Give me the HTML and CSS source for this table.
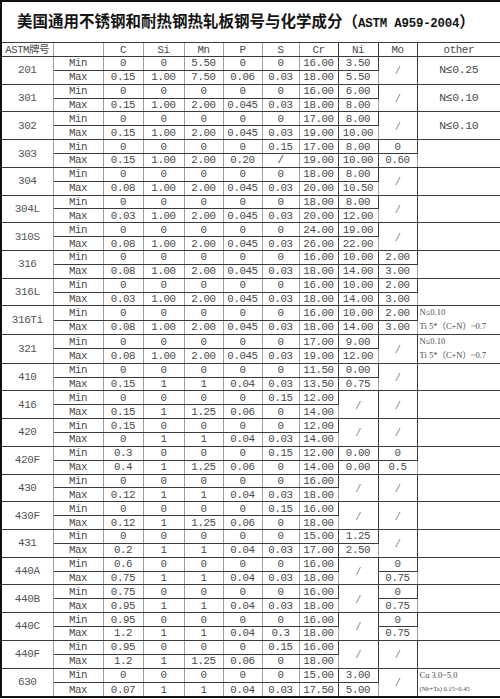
FILE: index.html
```html
<!DOCTYPE html>
<html lang="zh-CN">
<head>
<meta charset="utf-8">
<title>美国通用不锈钢和耐热钢热轧板钢号与化学成分</title>
<link rel="stylesheet" href="styles.css">
</head>
<body>
<table class="sheet">
<colgroup>
<col class="c1"><col class="c2"><col class="c3"><col class="c4"><col class="c5"><col class="c6"><col class="c7"><col class="c8"><col class="c9"><col class="c10"><col class="c11">
</colgroup>
<tbody>
<tr class="t"><td colspan="11" class="title">美国通用不锈钢和耐热钢热轧板钢号与化学成分（<span class="lat">ASTM A959-2004</span>）</td></tr>
<tr class="h"><td class="hd">ASTM牌号</td><td></td><td>C</td><td>Si</td><td>Mn</td><td>P</td><td>S</td><td class="cr">Cr</td><td class="ni">Ni</td><td class="mo">Mo</td><td>other</td></tr>

<tr class="d"><td class="g" rowspan="2">201</td><td class="m">Min</td><td>0</td><td>0</td><td>5.50</td><td>0</td><td>0</td><td class="cr">16.00</td><td class="ni">3.50</td><td class="mo sl" rowspan="2">/</td><td class="o" rowspan="2">N≤0.25</td></tr>
<tr class="d"><td class="m">Max</td><td>0.15</td><td>1.00</td><td>7.50</td><td>0.06</td><td>0.03</td><td class="cr">18.00</td><td class="ni">5.50</td></tr>

<tr class="d"><td class="g" rowspan="2">301</td><td class="m">Min</td><td>0</td><td>0</td><td>0</td><td>0</td><td>0</td><td class="cr">16.00</td><td class="ni">6.00</td><td class="mo sl" rowspan="2">/</td><td class="o" rowspan="2">N≤0.10</td></tr>
<tr class="d"><td class="m">Max</td><td>0.15</td><td>1.00</td><td>2.00</td><td>0.045</td><td>0.03</td><td class="cr">18.00</td><td class="ni">8.00</td></tr>

<tr class="d"><td class="g" rowspan="2">302</td><td class="m">Min</td><td>0</td><td>0</td><td>0</td><td>0</td><td>0</td><td class="cr">17.00</td><td class="ni">8.00</td><td class="mo sl" rowspan="2">/</td><td class="o" rowspan="2">N≤0.10</td></tr>
<tr class="d"><td class="m">Max</td><td>0.15</td><td>1.00</td><td>2.00</td><td>0.045</td><td>0.03</td><td class="cr">19.00</td><td class="ni">10.00</td></tr>

<tr class="d"><td class="g" rowspan="2">303</td><td class="m">Min</td><td>0</td><td>0</td><td>0</td><td>0</td><td>0.15</td><td class="cr">17.00</td><td class="ni">8.00</td><td class="mo">0</td><td class="o" rowspan="2"></td></tr>
<tr class="d"><td class="m">Max</td><td>0.15</td><td>1.00</td><td>2.00</td><td>0.20</td><td>/</td><td class="cr">19.00</td><td class="ni">10.00</td><td class="mo">0.60</td></tr>

<tr class="d"><td class="g" rowspan="2">304</td><td class="m">Min</td><td>0</td><td>0</td><td>0</td><td>0</td><td>0</td><td class="cr">18.00</td><td class="ni">8.00</td><td class="mo sl" rowspan="2">/</td><td class="o" rowspan="2"></td></tr>
<tr class="d"><td class="m">Max</td><td>0.08</td><td>1.00</td><td>2.00</td><td>0.045</td><td>0.03</td><td class="cr">20.00</td><td class="ni">10.50</td></tr>

<tr class="d"><td class="g" rowspan="2">304L</td><td class="m">Min</td><td>0</td><td>0</td><td>0</td><td>0</td><td>0</td><td class="cr">18.00</td><td class="ni">8.00</td><td class="mo sl" rowspan="2">/</td><td class="o" rowspan="2"></td></tr>
<tr class="d"><td class="m">Max</td><td>0.03</td><td>1.00</td><td>2.00</td><td>0.045</td><td>0.03</td><td class="cr">20.00</td><td class="ni">12.00</td></tr>

<tr class="d"><td class="g" rowspan="2">310S</td><td class="m">Min</td><td>0</td><td>0</td><td>0</td><td>0</td><td>0</td><td class="cr">24.00</td><td class="ni">19.00</td><td class="mo sl" rowspan="2">/</td><td class="o" rowspan="2"></td></tr>
<tr class="d"><td class="m">Max</td><td>0.08</td><td>1.00</td><td>2.00</td><td>0.045</td><td>0.03</td><td class="cr">26.00</td><td class="ni">22.00</td></tr>

<tr class="d"><td class="g" rowspan="2">316</td><td class="m">Min</td><td>0</td><td>0</td><td>0</td><td>0</td><td>0</td><td class="cr">16.00</td><td class="ni">10.00</td><td class="mo">2.00</td><td class="o" rowspan="2"></td></tr>
<tr class="d"><td class="m">Max</td><td>0.08</td><td>1.00</td><td>2.00</td><td>0.045</td><td>0.03</td><td class="cr">18.00</td><td class="ni">14.00</td><td class="mo">3.00</td></tr>

<tr class="d"><td class="g" rowspan="2">316L</td><td class="m">Min</td><td>0</td><td>0</td><td>0</td><td>0</td><td>0</td><td class="cr">16.00</td><td class="ni">10.00</td><td class="mo">2.00</td><td class="o" rowspan="2"></td></tr>
<tr class="d"><td class="m">Max</td><td>0.03</td><td>1.00</td><td>2.00</td><td>0.045</td><td>0.03</td><td class="cr">18.00</td><td class="ni">14.00</td><td class="mo">3.00</td></tr>

<tr class="d"><td class="g" rowspan="2">316Ti</td><td class="m">Min</td><td>0</td><td>0</td><td>0</td><td>0</td><td>0</td><td class="cr">16.00</td><td class="ni">10.00</td><td class="mo">2.00</td><td class="o note" rowspan="2"><div>N≤0.10</div><div>Ti 5*（C+N）~0.7</div></td></tr>
<tr class="d"><td class="m">Max</td><td>0.08</td><td>1.00</td><td>2.00</td><td>0.045</td><td>0.03</td><td class="cr">18.00</td><td class="ni">14.00</td><td class="mo">3.00</td></tr>

<tr class="d"><td class="g" rowspan="2">321</td><td class="m">Min</td><td>0</td><td>0</td><td>0</td><td>0</td><td>0</td><td class="cr">17.00</td><td class="ni">9.00</td><td class="mo sl" rowspan="2">/</td><td class="o note" rowspan="2"><div>N≤0.10</div><div>Ti 5*（C+N）~0.7</div></td></tr>
<tr class="d"><td class="m">Max</td><td>0.08</td><td>1.00</td><td>2.00</td><td>0.045</td><td>0.03</td><td class="cr">19.00</td><td class="ni">12.00</td></tr>

<tr class="d"><td class="g" rowspan="2">410</td><td class="m">Min</td><td>0</td><td>0</td><td>0</td><td>0</td><td>0</td><td class="cr">11.50</td><td class="ni">0.00</td><td class="mo sl" rowspan="2">/</td><td class="o" rowspan="2"></td></tr>
<tr class="d"><td class="m">Max</td><td>0.15</td><td>1</td><td>1</td><td>0.04</td><td>0.03</td><td class="cr">13.50</td><td class="ni">0.75</td></tr>

<tr class="d"><td class="g" rowspan="2">416</td><td class="m">Min</td><td>0</td><td>0</td><td>0</td><td>0</td><td>0.15</td><td class="cr">12.00</td><td class="ni sl" rowspan="2">/</td><td class="mo sl" rowspan="2">/</td><td class="o" rowspan="2"></td></tr>
<tr class="d"><td class="m">Max</td><td>0.15</td><td>1</td><td>1.25</td><td>0.06</td><td>0</td><td class="cr">14.00</td></tr>

<tr class="d"><td class="g" rowspan="2">420</td><td class="m">Min</td><td>0.15</td><td>0</td><td>0</td><td>0</td><td>0</td><td class="cr">12.00</td><td class="ni sl" rowspan="2">/</td><td class="mo sl" rowspan="2">/</td><td class="o" rowspan="2"></td></tr>
<tr class="d"><td class="m">Max</td><td>0</td><td>1</td><td>1</td><td>0.04</td><td>0.03</td><td class="cr">14.00</td></tr>

<tr class="d"><td class="g" rowspan="2">420F</td><td class="m">Min</td><td>0.3</td><td>0</td><td>0</td><td>0</td><td>0.15</td><td class="cr">12.00</td><td class="ni">0.00</td><td class="mo">0</td><td class="o" rowspan="2"></td></tr>
<tr class="d"><td class="m">Max</td><td>0.4</td><td>1</td><td>1.25</td><td>0.06</td><td>0</td><td class="cr">14.00</td><td class="ni">0.00</td><td class="mo">0.5</td></tr>

<tr class="d"><td class="g" rowspan="2">430</td><td class="m">Min</td><td>0</td><td>0</td><td>0</td><td>0</td><td>0</td><td class="cr">16.00</td><td class="ni sl" rowspan="2">/</td><td class="mo sl" rowspan="2">/</td><td class="o" rowspan="2"></td></tr>
<tr class="d"><td class="m">Max</td><td>0.12</td><td>1</td><td>1</td><td>0.04</td><td>0.03</td><td class="cr">18.00</td></tr>

<tr class="d"><td class="g" rowspan="2">430F</td><td class="m">Min</td><td>0</td><td>0</td><td>0</td><td>0</td><td>0.15</td><td class="cr">16.00</td><td class="ni sl" rowspan="2">/</td><td class="mo sl" rowspan="2">/</td><td class="o" rowspan="2"></td></tr>
<tr class="d"><td class="m">Max</td><td>0.12</td><td>1</td><td>1.25</td><td>0.06</td><td>0</td><td class="cr">18.00</td></tr>

<tr class="d"><td class="g" rowspan="2">431</td><td class="m">Min</td><td>0</td><td>0</td><td>0</td><td>0</td><td>0</td><td class="cr">15.00</td><td class="ni">1.25</td><td class="mo sl" rowspan="2">/</td><td class="o" rowspan="2"></td></tr>
<tr class="d"><td class="m">Max</td><td>0.2</td><td>1</td><td>1</td><td>0.04</td><td>0.03</td><td class="cr">17.00</td><td class="ni">2.50</td></tr>

<tr class="d"><td class="g" rowspan="2">440A</td><td class="m">Min</td><td>0.6</td><td>0</td><td>0</td><td>0</td><td>0</td><td class="cr">16.00</td><td class="ni sl" rowspan="2">/</td><td class="mo">0</td><td class="o" rowspan="2"></td></tr>
<tr class="d"><td class="m">Max</td><td>0.75</td><td>1</td><td>1</td><td>0.04</td><td>0.03</td><td class="cr">18.00</td><td class="mo">0.75</td></tr>

<tr class="d"><td class="g" rowspan="2">440B</td><td class="m">Min</td><td>0.75</td><td>0</td><td>0</td><td>0</td><td>0</td><td class="cr">16.00</td><td class="ni sl" rowspan="2">/</td><td class="mo">0</td><td class="o" rowspan="2"></td></tr>
<tr class="d"><td class="m">Max</td><td>0.95</td><td>1</td><td>1</td><td>0.04</td><td>0.03</td><td class="cr">18.00</td><td class="mo">0.75</td></tr>

<tr class="d"><td class="g" rowspan="2">440C</td><td class="m">Min</td><td>0.95</td><td>0</td><td>0</td><td>0</td><td>0</td><td class="cr">16.00</td><td class="ni sl" rowspan="2">/</td><td class="mo">0</td><td class="o" rowspan="2"></td></tr>
<tr class="d"><td class="m">Max</td><td>1.2</td><td>1</td><td>1</td><td>0.04</td><td>0.3</td><td class="cr">18.00</td><td class="mo">0.75</td></tr>

<tr class="d"><td class="g" rowspan="2">440F</td><td class="m">Min</td><td>0.95</td><td>0</td><td>0</td><td>0</td><td>0.15</td><td class="cr">16.00</td><td class="ni sl" rowspan="2">/</td><td class="mo sl" rowspan="2">/</td><td class="o" rowspan="2"></td></tr>
<tr class="d"><td class="m">Max</td><td>1.2</td><td>1</td><td>1.25</td><td>0.06</td><td>0</td><td class="cr">18.00</td></tr>

<tr class="d"><td class="g" rowspan="2">630</td><td class="m">Min</td><td>0</td><td>0</td><td>0</td><td>0</td><td>0</td><td class="cr">15.00</td><td class="ni">3.00</td><td class="mo sl" rowspan="2">/</td><td class="o note" rowspan="2"><div>Cu 3.0~5.0</div><div class="tiny">(Nb+Ta) 0.15~0.45</div></td></tr>
<tr class="d"><td class="m">Max</td><td>0.07</td><td>1</td><td>1</td><td>0.04</td><td>0.03</td><td class="cr">17.50</td><td class="ni">5.00</td></tr>
</tbody>
</table>
</body>
</html>
```

FILE: styles.css
```css
html, body {
  margin: 0;
  padding: 0;
  background: #ffffff;
}

.sheet {
  width: 500px;
  border-collapse: collapse;
  table-layout: fixed;
  border: 2px solid #111111;
  font-family: "Liberation Mono", "Noto Sans CJK SC", monospace;
  font-size: 10.8px;
  letter-spacing: -0.4px;
  color: #4a4a4a;
}

.c1 { width: 52px; }
.c2 { width: 50px; }
.c3 { width: 40px; }
.c4 { width: 41px; }
.c5 { width: 39px; }
.c6 { width: 39px; }
.c7 { width: 37px; }
.c8 { width: 39px; }
.c9 { width: 40px; }
.c10 { width: 39px; }
.c11 { width: 84px; }

.sheet td {
  border: 1px solid #3c3c3c;
  border-left-color: #a0a0a0;
  border-right-color: #a0a0a0;
  padding: 0;
  text-align: center;
  vertical-align: middle;
  line-height: 12px;
  white-space: nowrap;
  overflow: hidden;
}

.sheet td.cr,
.sheet td.ni,
.sheet td.mo {
  border-right-color: #3c3c3c;
}

.t td {
  height: 40px;
}

.title {
  text-align: left !important;
  padding-left: 15px !important;
  font-family: "Noto Sans CJK SC", sans-serif;
  font-weight: 700;
  font-size: 15.5px;
  letter-spacing: 0;
  color: #141414;
}

.lat {
  font-family: "Liberation Mono", monospace;
  font-size: 12.4px;
  letter-spacing: -0.2px;
}

.h td {
  height: 13px;
}

.hd {
  font-size: 10.5px;
}

.d td {
  height: 12.86px;
}

.g {
  font-size: 11px;
  color: #555555;
}

.sl {
  font-family: "Liberation Serif", serif;
  font-style: italic;
  font-size: 12px;
}

.o {
  font-size: 11.5px;
}

.note {
  text-align: left !important;
  padding-left: 2px !important;
  font-family: "Liberation Serif", "Noto Sans CJK SC", serif;
  font-size: 8.5px;
  letter-spacing: 0;
  line-height: 13.8px !important;
}

.tiny {
  font-size: 6.5px;
}
```
